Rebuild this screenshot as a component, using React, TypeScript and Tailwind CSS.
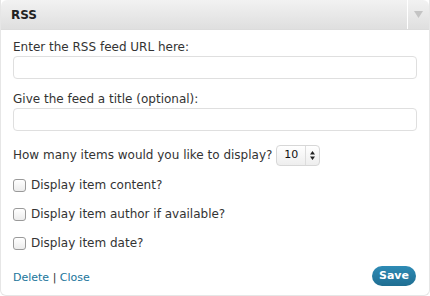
const font = { fontFamily: '"DejaVu Sans", Verdana, sans-serif' };

function Check({ label }: { label: string }) {
  return (
    <label className="flex items-center gap-[5px] h-[16px]">
      <span className="w-[13px] h-[13px] rounded-[3px] border border-[#9a9a9a] bg-gradient-to-b from-white to-[#ececec] shrink-0" />
      <span>{label}</span>
    </label>
  );
}

export default function App() {
  return (
    <div className="w-[430px] h-[296px] bg-white text-[#333] text-[12px]" style={font}>
      <div className="flex flex-col h-full border border-t-0 border-[#e6e6e6] rounded-b-[6px]">
        {/* title bar */}
        <div className="flex h-[30px] rounded-t-[6px] bg-gradient-to-b from-[#f2f2f2] to-[#dfdfdf] border-b border-[#dcdcdc]">
          <div className="flex-1 flex items-center pl-[10px] font-bold text-[12px] text-[#222]">RSS</div>
          <div className="w-[22px] border-l border-white flex items-center justify-center">
            <svg width="9" height="7" viewBox="0 0 9 7">
              <path d="M0 0 H9 L4.5 7 Z" fill="#c4c4c4" />
            </svg>
          </div>
        </div>

        <div className="flex-1 flex flex-col px-[12px] pt-[9px]">
          <div className="leading-[16px]">Enter the RSS feed URL here:</div>
          <div className="mt-[1px] h-[23px] rounded-[4px] border border-[#dfdfdf]" />

          <div className="mt-[12px] leading-[16px]">Give the feed a title (optional):</div>
          <div className="mt-[1px] h-[23px] rounded-[4px] border border-[#dfdfdf]" />

          <div className="mt-[13px] flex items-center gap-[4px] h-[22px]">
            <span>How many items would you like to display?</span>
            <div className="flex items-center h-[21px] w-[44px] rounded-[4px] border border-[#d7d7d7] bg-gradient-to-b from-white to-[#eeeeee] text-[11px] text-[#111]">
              <span className="flex-1 text-center">10</span>
              <span className="w-[14px] h-full border-l border-[#dddddd] flex items-center justify-center">
                <svg width="5" height="9" viewBox="0 0 5 9">
                  <path d="M0 3.5 L2.5 0 L5 3.5 Z M0 5.5 L5 5.5 L2.5 9 Z" fill="#222" />
                </svg>
              </span>
            </div>
          </div>

          <div className="mt-[11px] flex flex-col gap-[13px]">
            <Check label="Display item content?" />
            <Check label="Display item author if available?" />
            <Check label="Display item date?" />
          </div>

          <div className="mt-[15px] flex items-center justify-between">
            <div className="text-[11px] text-[#21759b] pt-[4px]">
              Delete <span className="text-[#333]">|</span> Close
            </div>
            <button className="h-[20px] w-[44px] mr-[1px] rounded-full bg-gradient-to-b from-[#2e8bb5] to-[#1f6e92] text-white text-[11px] font-bold">
              Save
            </button>
          </div>
        </div>
      </div>
    </div>
  );
}
